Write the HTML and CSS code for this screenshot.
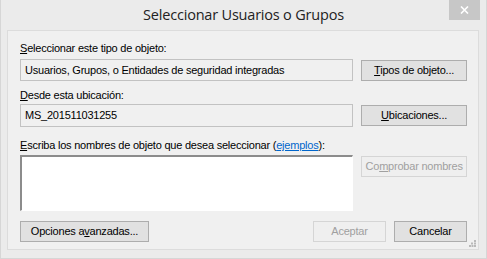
FILE: index.html
```html
<!DOCTYPE html>
<html lang="es">
<head>
<meta charset="utf-8">
<title>Seleccionar Usuarios o Grupos</title>
<link rel="stylesheet" href="styles.css">
</head>
<body>
<div class="window">
  <div class="titlebar">
    <span class="title">Seleccionar Usuarios o Grupos</span>
    <button class="close" aria-label="Cerrar">
      <svg width="9" height="8" viewBox="0 0 9 8"><path d="M1 0.5 L8 7.5 M8 0.5 L1 7.5" stroke="#fff" stroke-width="1.6" fill="none"/></svg>
    </button>
  </div>
  <div class="client">
    <div class="label lbl-1"><u>S</u>eleccionar este tipo de objeto:</div>
    <div class="row">
      <div class="field">Usuarios, Grupos, o Entidades de seguridad integradas</div>
      <button class="btn side"><u>T</u>ipos de objeto...</button>
    </div>
    <div class="label lbl-2"><u>D</u>esde esta ubicación:</div>
    <div class="row">
      <div class="field tall">MS_201511031255</div>
      <button class="btn side"><u>U</u>bicaciones...</button>
    </div>
    <div class="label lbl-3"><u>E</u>scriba los nombres de objeto que desea seleccionar (<a class="link" href="#">ejemplos</a>):</div>
    <div class="row top">
      <div class="textarea"></div>
      <button class="btn side disabled">Co<u>m</u>probar nombres</button>
    </div>
    <div class="footer">
      <button class="btn adv">Opciones a<u>v</u>anzadas...</button>
      <div class="actions">
        <button class="btn act disabled">Aceptar</button>
        <button class="btn act">Cancelar</button>
      </div>
    </div>
    <svg class="grip" width="7" height="7" viewBox="0 0 7 7">
      <rect x="5" y="0" width="2" height="2" fill="#b9b9b9"/>
      <rect x="2" y="2.5" width="2" height="2" fill="#b9b9b9"/>
      <rect x="5" y="2.5" width="2" height="2" fill="#b9b9b9"/>
      <rect x="0" y="5" width="2" height="2" fill="#b9b9b9"/>
      <rect x="2.5" y="5" width="2" height="2" fill="#b9b9b9"/>
      <rect x="5" y="5" width="2" height="2" fill="#b9b9b9"/>
    </svg>
  </div>
</div>
</body>
</html>
```
FILE: styles.css
```css
* { box-sizing: border-box; }
html, body { margin: 0; padding: 0; }
body {
  background: #ebebeb;
  font-family: "Liberation Sans", Arial, sans-serif;
  font-size: 11px;
  letter-spacing: -0.22px;
  color: #000;
}
.window {
  width: 487px;
  height: 259px;
  background: #ebebeb;
  border-left: 1px solid #d6d6d6;
  border-right: 1px solid #d6d6d6;
  border-bottom: 1px solid #d6d6d6;
  display: flex;
  flex-direction: column;
}
.titlebar {
  height: 30px;
  display: grid;
  grid-template-columns: 1fr auto 1fr;
  align-items: start;
}
.title {
  grid-column: 2;
  font-family: "Open Sans", "Noto Sans", sans-serif;
  font-size: 14.5px;
  line-height: 30px;
  color: #222;
  letter-spacing: -0.2px;
}
.close {
  grid-column: 3;
  justify-self: end;
  margin-right: 6px;
  width: 31px;
  height: 20px;
  border: 0;
  padding: 0;
  background: #c7c7c7;
  display: flex;
  align-items: center;
  justify-content: center;
}
.client {
  position: relative;
  margin: 0 7px 0 6px;
  height: 220px;
  background: #f0f0f0;
  border: 1px solid #dcdcdc;
  padding: 0 11px 0 12px;
  display: flex;
  flex-direction: column;
}
.label {
  line-height: 13px;
  white-space: nowrap;
}
.lbl-1 { margin-top: 11px; margin-bottom: 4px; }
.lbl-2 { margin-top: 8px; margin-bottom: 2px; }
.lbl-3 { margin-top: 12px; margin-bottom: 3px; }
.link { color: #0066cc; text-decoration: underline; }
.row {
  display: flex;
  align-items: center;
  gap: 8px;
}
.row.top { align-items: flex-start; }
.field {
  width: 334px;
  height: 22px;
  border: 1px solid #c2c2c2;
  background: #f0f0f0;
  padding: 0 0 0 4px;
  line-height: 20px;
  white-space: nowrap;
}
.field.tall { height: 23px; line-height: 21px; }
.textarea {
  width: 334px;
  height: 56px;
  background: #fff;
  border-style: solid;
  border-width: 2px 1px 1px 2px;
  border-color: #8c8c8c #fff #fff #8c8c8c;
}
.btn {
  font-family: "Liberation Sans", Arial, sans-serif;
  font-size: 11px;
  letter-spacing: -0.22px;
  color: #000;
  background: #e1e1e1;
  border: 1px solid #adadad;
  padding: 0;
  height: 21px;
  line-height: 19px;
  text-align: center;
  white-space: nowrap;
}
.btn.disabled {
  background: #efefef;
  border-color: #d5d5d5;
  color: #a0a0a0;
}
.side { width: 106px; }
.row.top .side { margin-top: 1px; }
.footer {
  margin-top: 10px;
  display: flex;
  justify-content: space-between;
  align-items: center;
}
.actions { display: flex; gap: 8px; }
.adv { width: 129px; }
.act { width: 73px; }
.grip {
  position: absolute;
  right: 2px;
  bottom: 2px;
}
```
